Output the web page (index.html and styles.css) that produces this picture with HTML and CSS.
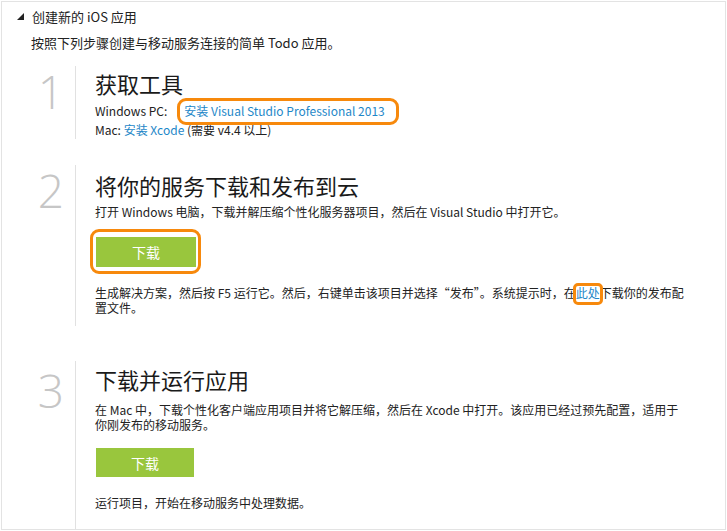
FILE: index.html
```html
<!DOCTYPE html>
<html lang="zh-CN">
<head>
<meta charset="utf-8">
<link rel="stylesheet" href="styles.css">
</head>
<body>
<div class="panel">
  <div class="header">
    <svg class="caret" width="7" height="7" viewBox="0 0 7 7"><polygon points="7,0 7,7 0,7" fill="#222"/></svg>
    <span class="title">创建新的 iOS 应用</span>
  </div>
  <p class="intro">按照下列步骤创建与移动服务连接的简单 Todo 应用。</p>

  <div class="step step1">
    <div class="num">1</div>
    <div class="body">
      <h2>获取工具</h2>
      <div class="line">Windows PC:<span class="ring ring-link"><a class="link">安装 Visual Studio Professional 2013</a></span></div>
      <div class="line">Mac: <a class="link">安装 Xcode</a> (需要 v4.4 以上)</div>
    </div>
  </div>

  <div class="step step2">
    <div class="num">2</div>
    <div class="body">
      <h2>将你的服务下载和发布到云</h2>
      <p class="text first">打开 Windows 电脑，下载并解压缩个性化服务器项目，然后在 Visual Studio 中打开它。</p>
      <div class="btn-row"><span class="ring ring-btn"><span class="btn">下载</span></span></div>
      <p class="text">生成解决方案，然后按 F5 运行它。然后，右键单击该项目并选择“发布”。系统提示时，在<span class="ring ring-here"><a class="link">此处</a></span>下载你的发布配置文件。</p>
    </div>
  </div>

  <div class="step step3">
    <div class="num">3</div>
    <div class="body">
      <h2>下载并运行应用</h2>
      <p class="text first">在 Mac 中，下载个性化客户端应用项目并将它解压缩，然后在 Xcode 中打开。该应用已经过预先配置，适用于你刚发布的移动服务。</p>
      <div class="btn-row"><span class="btn">下载</span></div>
      <p class="text last">运行项目，开始在移动服务中处理数据。</p>
    </div>
  </div>
</div>
</body>
</html>
```
FILE: styles.css
```css
html, body {
  margin: 0;
  padding: 0;
  background: #fff;
}
body {
  font-family: "Noto Sans CJK SC", "Noto Sans", sans-serif;
  color: #222;
  font-size: 12px;
}
.panel {
  margin: 1px;
  width: 725px;
  height: 529px;
  box-sizing: border-box;
  border: 1px solid #e3e3e3;
  overflow: hidden;
}
.header {
  display: flex;
  align-items: center;
  height: 30px;
  padding-left: 15px;
}
.caret {
  margin-right: 8px;
  margin-top: -2px;
}
.title {
  font-size: 13px;
  line-height: 18px;
}
.intro {
  margin: 1px 0 0 29px;
  font-size: 13px;
  line-height: 20px;
}
.step {
  display: flex;
  margin-left: 29px;
}
.num {
  width: 45px;
  box-sizing: border-box;
  border-right: 1px solid #e1e1e1;
  font-family: "Open Sans", "Noto Sans", sans-serif;
  font-weight: 300;
  font-size: 46px;
  line-height: 46px;
  color: #c6c6c6;
  text-align: right;
  padding-right: 11px;
  padding-top: 2px;
}
.body {
  padding-left: 19px;
  width: 590px;
}
h2 {
  margin: 2px 0 3px;
  font-weight: normal;
  font-size: 22px;
  line-height: 30px;
  color: #1a1a1a;
}
.line {
  line-height: 19px;
  height: 19px;
}
.link {
  color: #1e87c8;
}
.step1 { margin-top: 13px; }
.step2 { margin-top: 26px; }
.step3 { margin-top: 35px; flex: 1; height: 170px; }
.step2 h2 { margin-top: 5px; }
.step3 h2 { margin-top: 3px; }
.step2 .body { padding-bottom: 11px; }
.step3 .num { padding-top: 6px; }
.text {
  margin: 0;
  line-height: 15px;
}
.text.first {
  margin-top: 4px;
}
.step3 .text.first { margin-top: 8px; }
.step2 .text.first { line-height: 16px; }
.ring {
  position: relative;
  display: inline-block;
}
.ring::after {
  content: "";
  position: absolute;
  border: 3px solid #f7890c;
  border-radius: 9px;
  pointer-events: none;
}
.ring-link {
  margin-left: 17px;
}
.ring-link::after {
  left: -7px;
  right: -14px;
  top: -3px;
  bottom: -5px;
}
.ring-here::after {
  left: -3px;
  right: -3px;
  top: -2px;
  bottom: -5px;
  border-radius: 5px;
}
.ring-btn::after {
  left: -6px;
  right: -5px;
  top: -8px;
  bottom: -7px;
}
.btn-row {
  margin: 17px 0 18px 1px;
  display: flex;
}
.step3 .btn-row {
  margin: 16px 0 18px 1px;
}
.btn {
  display: flex;
  align-items: center;
  justify-content: center;
  width: 100px;
  height: 30px;
  background: #99c63d;
  color: #fff;
  font-size: 14px;
}
.step3 .btn {
  width: 98px;
  height: 29px;
}
```
